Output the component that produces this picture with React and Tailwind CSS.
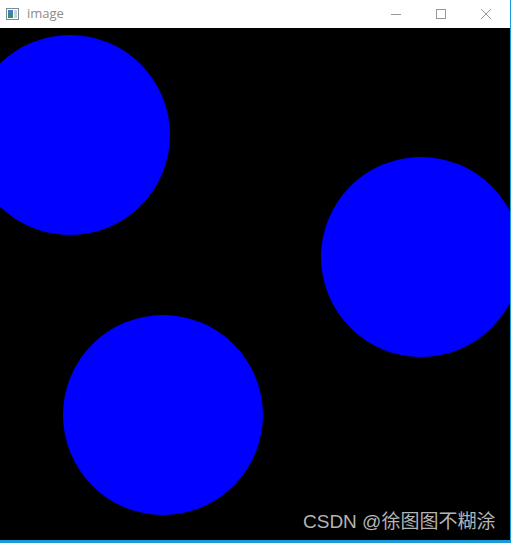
export default function App() {
  return (
    <div className="w-[511px] h-[543px] flex flex-col bg-white overflow-hidden" style={{ fontFamily: '"Noto Sans", "Noto Sans CJK SC", sans-serif' }}>
      {/* Title bar */}
      <div className="h-[28px] flex items-center bg-white border-r border-[#1a9bd7] shrink-0">
        <svg width="13" height="12" viewBox="0 0 13 12" className="ml-[6px]">
          <rect x="0.5" y="0.5" width="12" height="11" fill="#fff" stroke="#7a8a96" />
          <rect x="2" y="2" width="5" height="8" fill="#3a8a7a" />
          <rect x="2" y="2" width="5" height="3" fill="#4a7ec0" />
          <rect x="8" y="2" width="3" height="8" fill="#c9d3dc" />
        </svg>
        <span className="ml-[8px] text-[13px] leading-none text-[#8c8c8c] pb-[1px]" style={{ fontFamily: '"Open Sans", sans-serif' }}>image</span>
        <div className="flex-1" />
        <svg width="12" height="12" viewBox="0 0 12 12" className="mr-[33px]">
          <line x1="1" y1="6.5" x2="11" y2="6.5" stroke="#999" strokeWidth="1" />
        </svg>
        <svg width="12" height="12" viewBox="0 0 12 12" className="mr-[33px]">
          <rect x="1.5" y="1.5" width="9" height="9" fill="none" stroke="#999" strokeWidth="1" />
        </svg>
        <svg width="12" height="12" viewBox="0 0 12 12" className="mr-[18px]">
          <path d="M1 1 L11 11 M11 1 L1 11" stroke="#999" strokeWidth="1" />
        </svg>
      </div>

      {/* Canvas */}
      <div className="relative flex-1 bg-black border-r border-[#1a9bd7]">
        <svg width="510" height="512" viewBox="0 0 510 512" className="block">
          <circle cx="70" cy="107" r="100" fill="#0000ff" />
          <circle cx="421" cy="229" r="100" fill="#0000ff" />
          <circle cx="163" cy="387" r="100" fill="#0000ff" />
        </svg>
        <div className="absolute left-[303px] top-[484px] text-[19px] leading-none text-[#b4b4b4] whitespace-nowrap" style={{ fontFamily: '"Liberation Sans", "Noto Sans CJK SC", sans-serif' }}>
          CSDN @徐图图不糊涂
        </div>
      </div>
      <div className="h-[3px] bg-[#1a9bd7] shrink-0" />
    </div>
  );
}
